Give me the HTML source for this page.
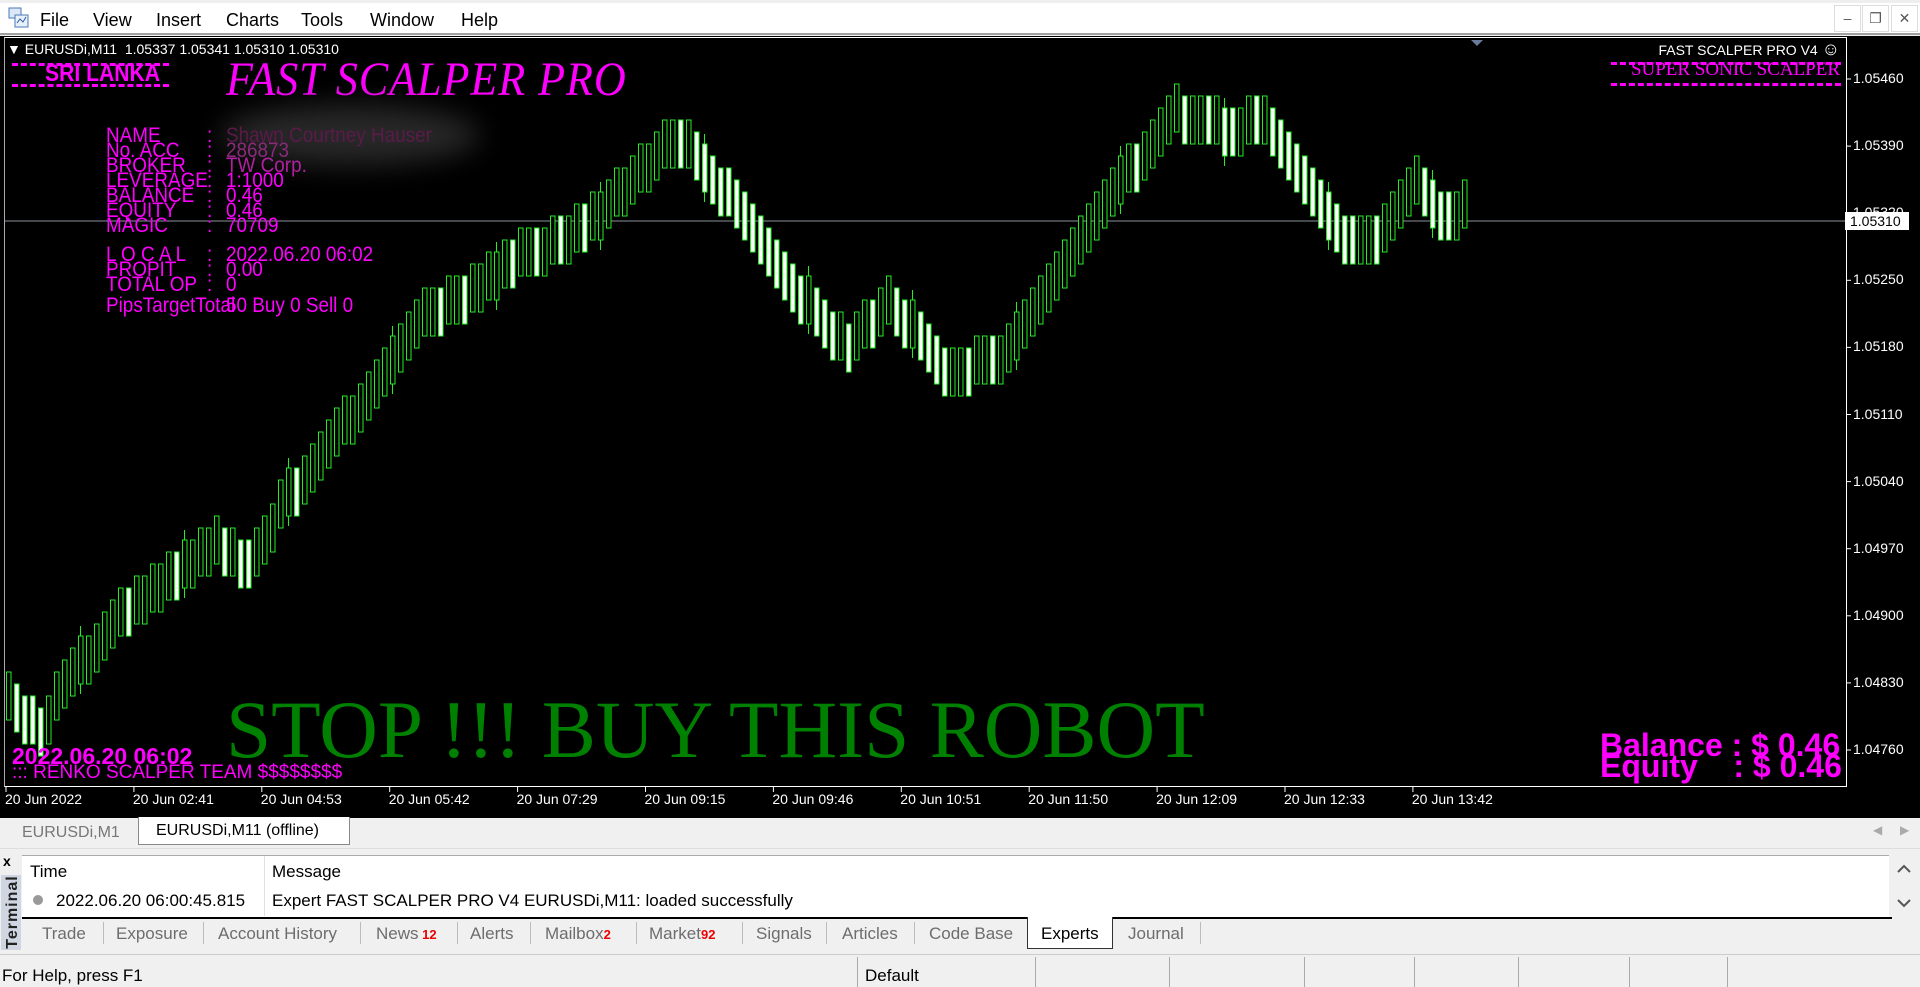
<!DOCTYPE html>
<html><head><meta charset="utf-8">
<style>
*{margin:0;padding:0;box-sizing:border-box}
body{width:1920px;height:987px;overflow:hidden;background:#f0f0f0;font-family:"Liberation Sans",sans-serif;position:relative}
.a{position:absolute;white-space:nowrap}
.menu{left:0;top:0;width:1920px;height:35px;background:#fff;border-top:3px solid #eee;border-bottom:2px solid #a0a0a0}
.menu span{position:absolute;top:7px;font-size:18px;color:#000}
.wb{top:5px;width:27px;height:27px;border:1px solid #ddd;background:#fff;color:#555;font-size:14px;text-align:center;line-height:25px}
.blk{left:0;top:36px;width:1920px;height:780px;background:#000}
.frame{left:4px;top:37px;width:1843px;height:750px;border:1px solid #fff;border-left:1px solid #aaa}
.w13{color:#fff;font-size:14px}
.mag{color:#ff00ff}
.info{font-size:21px;color:#ff00ff;line-height:15px;transform:scaleX(.9);transform-origin:left}
.dash{height:0;border-top:3px dashed #ff00ff}
.tab{font-size:17px;color:#6d6d6d;top:924px}
.sep{top:922px;width:1px;height:22px;background:#bbb}
.red{color:#e00;font-weight:bold;font-size:13px}
</style></head><body>
<div class="a menu">
 <svg class="a" style="left:8px;top:4px" width="22" height="22"><rect x="1" y="1" width="12" height="10" fill="#dce8f8" stroke="#4a78b8"/><rect x="7" y="8" width="13" height="12" fill="#e8f0fa" stroke="#4a78b8"/><path d="M9 16 l3-4 3 3 3-5" stroke="#2a5ca8" fill="none"/></svg>
 <span style="left:40px">File</span><span style="left:93px">View</span><span style="left:156px">Insert</span><span style="left:226px">Charts</span><span style="left:301px">Tools</span><span style="left:370px">Window</span><span style="left:461px">Help</span>
</div>
<div class="a wb" style="left:1834px">–</div><div class="a wb" style="left:1862px">❐</div><div class="a wb" style="left:1891px">✕</div>
<div class="a blk"></div>
<div class="a frame"></div>
<svg class="a" style="left:0;top:0" width="1920" height="816" id="ch">
 <line x1="5" y1="221" x2="1846" y2="221" stroke="#8a8f99" stroke-width="1"/>
 <polygon points="1471,40 1483,40 1477,46" fill="#6a7a9a"/>
</svg>
<div class="a w13" style="left:7px;top:41px">▼ EURUSDi,M11&nbsp; 1.05337 1.05341 1.05310 1.05310</div>
<div class="a dash" style="left:12px;top:63px;width:157px"></div>
<div class="a dash" style="left:12px;top:84px;width:157px"></div>
<div class="a mag" style="left:45px;top:60px;font-size:24px;font-weight:bold;transform:scaleX(.88);transform-origin:left">SRI LANKA</div>
<div class="a mag" style="left:226px;top:52px;font-family:'Liberation Serif',serif;font-style:italic;font-size:48px;letter-spacing:1px;transform:scaleX(.92);transform-origin:left">FAST SCALPER PRO</div>
<div class="a" style="left:220px;top:105px;width:260px;height:60px;border-radius:50%;background:#3a3a3a;filter:blur(14px);opacity:.7"></div>
<div class="a info" style="left:106px;top:128px">NAME<br>No. ACC<br>BROKER<br>LEVERAGE<br>BALANCE<br>EQUITY<br>MAGIC</div>
<div class="a info" style="left:207px;top:128px">:<br>:<br>:<br>:<br>:<br>:<br>:</div>
<div class="a info" style="left:226px;top:128px"><span style="color:#5a1a4a">Shawn Courtney Hauser</span><br><span style="color:#8a2a7a">286873</span><br><span style="color:#b020a0">TW Corp.</span><br>1:1000<br>0.46<br>0.46<br>70709</div>
<div class="a info" style="left:106px;top:247px">L O C A L<br>PROPIT<br>TOTAL OP<br></div>
<div class="a info" style="left:207px;top:247px">:<br>:<br>:</div>
<div class="a info" style="left:226px;top:247px">2022.06.20 06:02<br>0.00<br>0</div>
<div class="a info" style="left:106px;top:298px">PipsTargetTotal</div>
<div class="a info" style="left:226px;top:298px">50 Buy 0 Sell 0</div>
<div class="a w13" style="right:80px;top:39px;font-size:14px">FAST SCALPER PRO V4 <span style="font-size:18px">☺</span></div>
<div class="a dash" style="left:1611px;top:62px;width:230px"></div>
<div class="a dash" style="left:1611px;top:83px;width:230px"></div>
<div class="a mag" style="right:80px;top:59px;font-family:'Liberation Serif',serif;font-size:19px">SUPER SONIC SCALPER</div>
<div class="a" style="left:226px;top:680px;font-family:'Liberation Serif',serif;font-size:82px;color:#008000;line-height:100px;transform:scaleX(.99);transform-origin:left">STOP !!! BUY THIS ROBOT</div>
<div class="a mag" style="left:12px;top:743px;font-size:23px;font-weight:bold">2022.06.20 06:02</div>
<div class="a mag" style="left:12px;top:762px;font-size:19px">::: RENKO SCALPER TEAM $$$$$$$$</div>
<div class="a mag" style="left:1600px;top:729px;font-size:32px;font-weight:bold;line-height:32px">Balance : $ 0.46</div>
<div class="a mag" style="left:1600px;top:750px;font-size:32px;font-weight:bold;line-height:32px">Equity&nbsp;&nbsp;&nbsp;&nbsp;: $ 0.46</div>
<div id="px"></div>
<div class="a" style="left:1845px;top:212px;width:64px;height:18px;background:#fff;color:#000;font-size:14px;padding:1px 0 0 5px">1.05310</div>
<div class="a" style="left:0;top:816px;width:1920px;height:2px;background:#000"></div>
<div class="a" style="left:5px;top:820px;width:133px;height:25px;font-size:16px;color:#777;padding:4px 0 0 17px">EURUSDi,M1</div>
<div class="a" style="left:138px;top:817px;width:212px;height:28px;background:#fff;border:1px solid #888;border-top:none;font-size:16px;color:#000;padding:5px 0 0 17px">EURUSDi,M11 (offline)</div>
<div class="a" style="left:1873px;top:823px;color:#aaa;font-size:12px">◀</div><div class="a" style="left:1900px;top:823px;color:#aaa;font-size:12px">▶</div>
<div class="a" style="left:0;top:848px;width:1920px;height:1px;background:#ddd"></div>
<div class="a" style="left:3px;top:853px;font-size:14px;font-weight:bold">x</div>
<div class="a" style="left:1px;top:875px;width:20px;height:75px;background:#cfd6e2"></div>
<div class="a" style="left:-24px;top:903px;font-size:16px;font-weight:bold;color:#222;transform:rotate(-90deg);letter-spacing:1px">Terminal</div>
<div class="a" style="left:22px;top:855px;width:1867px;height:63px;background:#fff;border-top:1px solid #aaa"></div>
<div class="a" style="left:264px;top:856px;width:1px;height:60px;background:#e0e0e0"></div>
<div class="a" style="left:30px;top:862px;font-size:17px">Time</div>
<div class="a" style="left:272px;top:862px;font-size:17px">Message</div>
<div class="a" style="left:33px;top:895px;width:10px;height:10px;border-radius:50%;background:#999"></div>
<div class="a" style="left:56px;top:891px;font-size:17px">2022.06.20 06:00:45.815</div>
<div class="a" style="left:272px;top:891px;font-size:17px">Expert FAST SCALPER PRO V4 EURUSDi,M11: loaded successfully</div>
<div class="a" style="left:1889px;top:855px;width:30px;height:63px;background:#f0f0f0"></div>
<svg class="a" style="left:1894px;top:860px" width="20" height="55"><path d="M4 12 L10 6 L16 12" stroke="#555" stroke-width="2" fill="none"/><path d="M4 40 L10 46 L16 40" stroke="#555" stroke-width="2" fill="none"/></svg>
<div class="a" style="left:22px;top:917px;width:1870px;height:2px;background:#000"></div>
<div class="a tab" style="left:42px">Trade</div><div class="a sep" style="left:103px"></div>
<div class="a tab" style="left:116px">Exposure</div><div class="a sep" style="left:203px"></div>
<div class="a tab" style="left:218px">Account History</div><div class="a sep" style="left:360px"></div>
<div class="a tab" style="left:376px">News<span class="red"> 12</span></div><div class="a sep" style="left:457px"></div>
<div class="a tab" style="left:470px">Alerts</div><div class="a sep" style="left:530px"></div>
<div class="a tab" style="left:545px">Mailbox<span class="red">2</span></div><div class="a sep" style="left:636px"></div>
<div class="a tab" style="left:649px">Market<span class="red">92</span></div><div class="a sep" style="left:742px"></div>
<div class="a tab" style="left:756px">Signals</div><div class="a sep" style="left:826px"></div>
<div class="a tab" style="left:842px">Articles</div><div class="a sep" style="left:914px"></div>
<div class="a tab" style="left:929px">Code Base</div>
<div class="a" style="left:1027px;top:917px;width:86px;height:32px;background:#fff;border:1px solid #333;border-top:none"></div>
<div class="a tab" style="left:1041px;color:#000">Experts</div>
<div class="a tab" style="left:1128px">Journal</div><div class="a sep" style="left:1200px"></div>
<div class="a" style="left:0;top:954px;width:1920px;height:1px;background:#ccc"></div>
<div class="a" style="left:2px;top:966px;font-size:17px">For Help, press F1</div>
<div class="a" style="left:865px;top:966px;font-size:17px">Default</div>
<div id="ss"></div>
<script>
var svg=document.getElementById('ch'),h='';
var pl=['1.05460','1.05390','1.05320','1.05250','1.05180','1.05110','1.05040','1.04970','1.04900','1.04830','1.04760'];
var ph='';
for(var i=0;i<pl.length;i++){var y=79+i*67.1;h+='<line x1="1846" y1="'+y+'" x2="1851" y2="'+y+'" stroke="#fff"/>';
ph+='<div class="a w13" style="left:1853px;top:'+(y-9)+'px">'+pl[i]+'</div>';}
var tl=['20 Jun 2022','20 Jun 02:41','20 Jun 04:53','20 Jun 05:42','20 Jun 07:29','20 Jun 09:15','20 Jun 09:46','20 Jun 10:51','20 Jun 11:50','20 Jun 12:09','20 Jun 12:33','20 Jun 13:42'];
for(var i=0;i<tl.length;i++){var x=5+i*127.9;h+='<line x1="'+(x+1)+'" y1="787" x2="'+(x+1)+'" y2="792" stroke="#fff"/>';
ph+='<div class="a w13" style="left:'+x+'px;top:791px">'+tl[i]+'</div>';}
document.getElementById('px').innerHTML=ph;
var d=[[5,565],[30,600],[50,560],[100,500],[140,470],[175,445],[190,455],[205,460],[230,410],[300,320],[350,250],[360,250],[375,245],[420,210],[470,190],[500,160],[550,110],[600,170],[620,200],[650,240],[690,285],[725,245],[770,305],[820,290],[870,215],[920,140],[960,90],[975,100],[990,95],[1005,110],[1030,95],[1070,160],[1100,200],[1120,195],[1155,145],[1180,180],[1192,168]];
for(var i=0;i<d.length;i++){d[i]=[d[i][0]*1.2245,d[i][1]*1.2245];}
function tgt(x){for(var i=1;i<d.length;i++){if(x<=d[i][0]){var a=d[i-1],b=d[i];return a[1]+(b[1]-a[1])*(x-a[0])/(b[0]-a[0]);}}return d[d.length-1][1];}
var prev=null;
for(var x=6;x<=1462;x+=8){var c=Math.round(tgt(x)/12)*12;var down=prev!==null&&c>prev;if(prev!==null&&c==prev){down=((x/8)|0)%3==0;}
var fill=down?'#fff':'#000';
if((x*7)%13==0)h+='<line x1="'+(x+2.5)+'" y1="'+(c-34)+'" x2="'+(x+2.5)+'" y2="'+(c+34)+'" stroke="#22ee22"/>';
h+='<rect x="'+(x+0.5)+'" y="'+(c-24)+'" width="4.5" height="48" fill="'+fill+'" stroke="#22ee22" stroke-width="1"/>';prev=c;}
svg.innerHTML+=h;
var s=[857,1035,1169,1304,1414,1518,1629,1727],sh='';
for(var i=0;i<s.length;i++)sh+='<div class="a" style="left:'+s[i]+'px;top:957px;width:1px;height:30px;background:#aaa"></div>';
document.getElementById('ss').innerHTML=sh;
</script>
</body></html>
